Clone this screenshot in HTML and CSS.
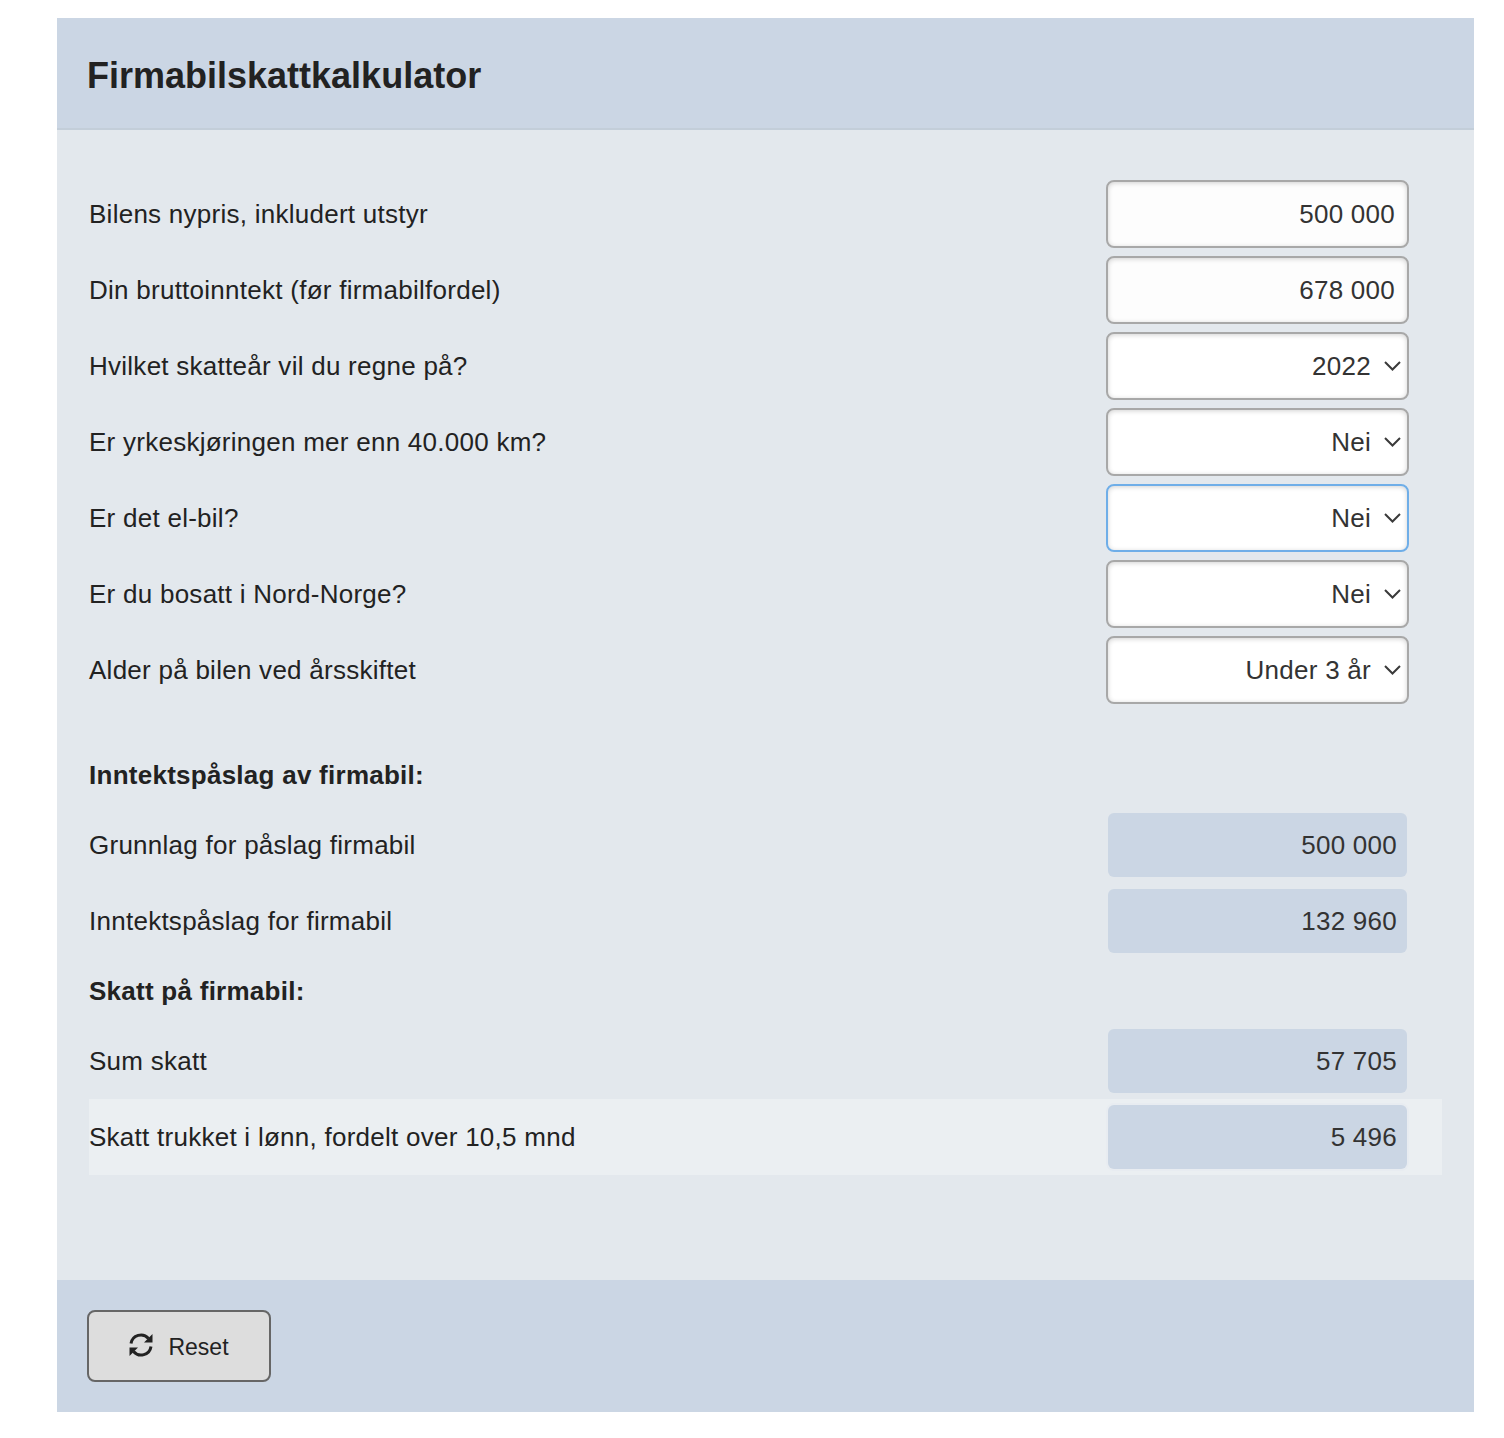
FILE: index.html
```html
<!DOCTYPE html>
<html lang="no">
<head>
    <meta charset="UTF-8">
    <meta name="viewport" content="width=device-width, initial-scale=1.0">
    <title>Firmabilskattkalkulator</title>
    <link rel="stylesheet" href="styles.css">
</head>
<body>
    <div class="calculator">
        <div class="calc-header">
            <h1>Firmabilskattkalkulator</h1>
        </div>

        <div class="calc-body">
            <div class="inputs">
                <div class="row">
                    <label class="row-label" for="price">Bilens nypris, inkludert utstyr</label>
                    <div class="field"><input class="control" id="price" type="text" value="500 000"></div>
                </div>
                <div class="row">
                    <label class="row-label" for="income">Din bruttoinntekt (før firmabilfordel)</label>
                    <div class="field"><input class="control" id="income" type="text" value="678 000"></div>
                </div>
                <div class="row">
                    <label class="row-label" for="year">Hvilket skatteår vil du regne på?</label>
                    <div class="field">
                        <select class="control select" id="year"><option>2022</option></select>
                        <svg class="chevron" viewBox="0 0 17 10"><path d="M1 1l7.5 7.5L16 1"/></svg>
                    </div>
                </div>
                <div class="row">
                    <label class="row-label" for="km">Er yrkeskjøringen mer enn 40.000 km?</label>
                    <div class="field">
                        <select class="control select" id="km"><option>Nei</option></select>
                        <svg class="chevron" viewBox="0 0 17 10"><path d="M1 1l7.5 7.5L16 1"/></svg>
                    </div>
                </div>
                <div class="row">
                    <label class="row-label" for="el">Er det el-bil?</label>
                    <div class="field">
                        <select class="control select is-focused" id="el"><option>Nei</option></select>
                        <svg class="chevron" viewBox="0 0 17 10"><path d="M1 1l7.5 7.5L16 1"/></svg>
                    </div>
                </div>
                <div class="row">
                    <label class="row-label" for="north">Er du bosatt i Nord-Norge?</label>
                    <div class="field">
                        <select class="control select" id="north"><option>Nei</option></select>
                        <svg class="chevron" viewBox="0 0 17 10"><path d="M1 1l7.5 7.5L16 1"/></svg>
                    </div>
                </div>
                <div class="row">
                    <label class="row-label" for="age">Alder på bilen ved årsskiftet</label>
                    <div class="field">
                        <select class="control select" id="age"><option>Under 3 år</option></select>
                        <svg class="chevron" viewBox="0 0 17 10"><path d="M1 1l7.5 7.5L16 1"/></svg>
                    </div>
                </div>
            </div>

            <h2 class="section-title">Inntektspåslag av firmabil:</h2>
            <div class="row">
                <span class="row-label">Grunnlag for påslag firmabil</span>
                <div class="field"><output class="result">500 000</output></div>
            </div>
            <div class="row">
                <span class="row-label">Inntektspåslag for firmabil</span>
                <div class="field"><output class="result">132 960</output></div>
            </div>

            <h2 class="section-title">Skatt på firmabil:</h2>
            <div class="row">
                <span class="row-label">Sum skatt</span>
                <div class="field"><output class="result">57 705</output></div>
            </div>
            <div class="row row-active">
                <span class="row-label">Skatt trukket i lønn, fordelt over 10,5 mnd</span>
                <div class="field"><output class="result">5 496</output></div>
            </div>
        </div>

        <div class="calc-footer">
            <button class="reset-btn" type="button">
                <svg class="reset-icon" viewBox="0 0 24 24">
                    <path class="reset-arc" d="M2 10.5A10 10 0 0 1 19.5 5.5"/>
                    <path class="reset-arc" d="M22 13.5A10 10 0 0 1 4.500 18.500"/>
                    <path d="M23.500 1v8.500H15z"/>
                    <path d="M.5 23v-8.500H9z"/>
                </svg>
                Reset
            </button>
        </div>
    </div>
</body>
</html>
```

FILE: styles.css
```css
:root {
    --panel-color: #cbd6e4;
    --body-color: #e3e8ed;
    --text-color: #222;
    --value-color: #333;
}

* {
    margin: 0;
    padding: 0;
    box-sizing: border-box;
}

body {
    font-family: "Liberation Sans", Arial, sans-serif;
    background-color: #fff;
    color: var(--text-color);
    padding: 18px 30px 26px 57px;
}

.calculator {
    width: 1417px;
}

.calc-header {
    height: 112px;
    padding: 5px 30px 0;
    display: flex;
    align-items: center;
    background-color: var(--panel-color);
    border-bottom: 2px solid #c3ced9;
}

h1 {
    font-size: 36px;
    font-weight: 700;
}

.calc-body {
    background-color: var(--body-color);
    padding: 46px 32px 105px;
}

.inputs {
    margin-bottom: 35px;
}

.row {
    height: 76px;
    display: flex;
    align-items: center;
    justify-content: space-between;
    padding-right: 33px;
}

.row-label {
    font-size: 26px;
    letter-spacing: 0.26px;
}

.row-active {
    background-color: #ebeff2;
}

.section-title {
    height: 64px;
    line-height: 64px;
    font-size: 26px;
    letter-spacing: 0.26px;
    font-weight: 700;
}

.field {
    position: relative;
    width: 303px;
}

.control {
    display: block;
    width: 100%;
    height: 68px;
    padding: 0 12px;
    font-family: inherit;
    font-size: 26px;
    letter-spacing: 0.26px;
    color: var(--value-color);
    text-align: right;
    background-color: #fdfdfd;
    border: 2px solid #a8a8a8;
    border-radius: 8px;
    box-shadow: inset 0 1px 5px rgba(0, 0, 0, 0.18);
    outline: none;
}

.select {
    padding-right: 36px;
    appearance: none;
    text-align-last: right;
    background-color: #fff;
}

.select.is-focused {
    border-color: #6faee8;
}

.chevron {
    position: absolute;
    top: 29px;
    right: 8px;
    width: 17px;
    height: 10px;
    fill: none;
    stroke: #3a3a3a;
    stroke-width: 2;
    pointer-events: none;
}

.result {
    display: block;
    height: 64px;
    line-height: 64px;
    margin: 0 2px;
    padding-right: 10px;
    font-size: 26px;
    letter-spacing: 0.26px;
    color: var(--value-color);
    text-align: right;
    background-color: var(--panel-color);
    border-radius: 6px;
}

.row-active .result {
    box-shadow: 0 0 0 2px #e8ecf1;
}

.calc-footer {
    height: 132px;
    padding: 30px;
    background-color: var(--panel-color);
}

.reset-btn {
    width: 184px;
    height: 72px;
    padding-top: 2px;
    display: flex;
    align-items: center;
    justify-content: center;
    gap: 15px;
    font-family: inherit;
    font-size: 23px;
    color: var(--text-color);
    background-color: #ddd;
    border: 2px solid #666;
    border-radius: 8px;
    cursor: pointer;
}

.reset-icon {
    width: 24px;
    height: 24px;
    margin-bottom: 4px;
    fill: #222;
}

.reset-arc {
    fill: none;
    stroke: #222;
    stroke-width: 3;
}
```
